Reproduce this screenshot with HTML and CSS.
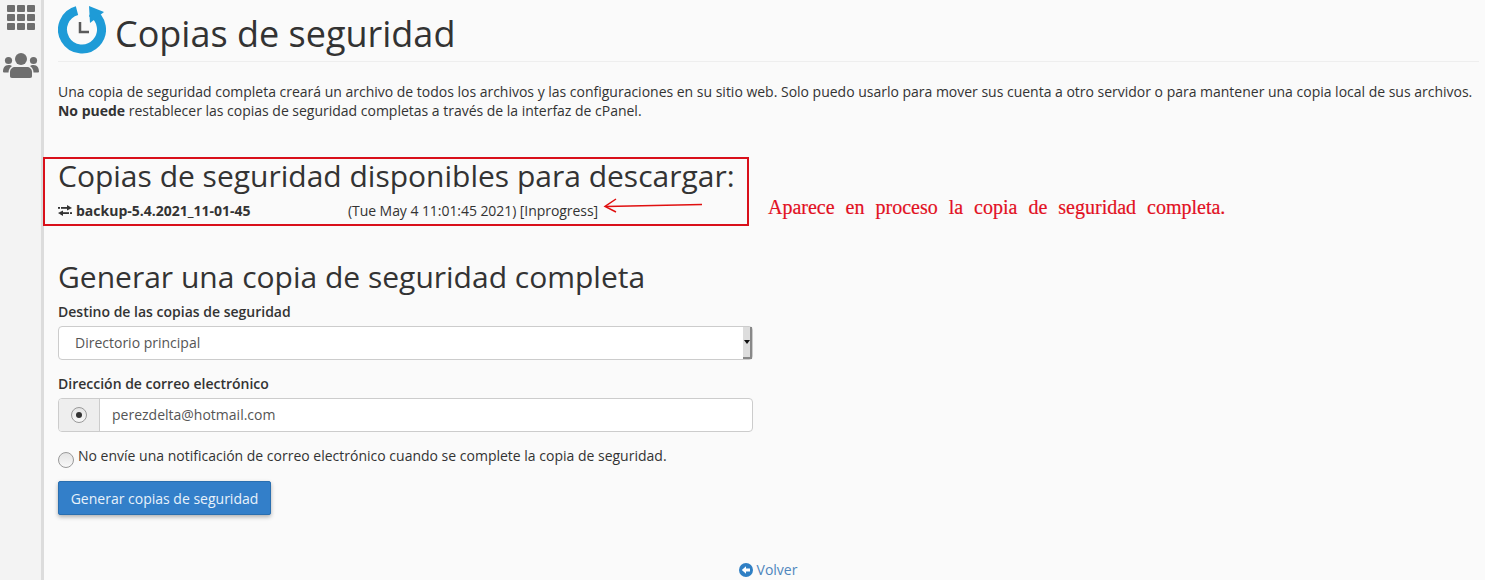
FILE: index.html
```html
<!DOCTYPE html>
<html lang="es">
<head>
<meta charset="utf-8">
<title>Copias de seguridad</title>
<link rel="stylesheet" href="styles.css">
</head>
<body>
<div class="shell">
  <aside class="rail">
    <svg class="rail-apps" width="28" height="25" viewBox="0 0 28 25"><g fill="#6e6e6e"><rect x="0" y="0" width="8" height="7" rx="1"/><rect x="10" y="0" width="8" height="7" rx="1"/><rect x="20" y="0" width="8" height="7" rx="1"/><rect x="0" y="9" width="8" height="7" rx="1"/><rect x="10" y="9" width="8" height="7" rx="1"/><rect x="20" y="9" width="8" height="7" rx="1"/><rect x="0" y="18" width="8" height="7" rx="1"/><rect x="10" y="18" width="8" height="7" rx="1"/><rect x="20" y="18" width="8" height="7" rx="1"/></g></svg>
    <svg class="rail-users" width="36" height="25" viewBox="0 0 36 25"><g fill="#6e6e6e"><circle cx="18" cy="6" r="6"/><circle cx="5.500" cy="7.500" r="3.600"/><circle cx="30.500" cy="7.500" r="3.600"/><path d="M9 25c-1.500 0-2-1-2-2v-4c0-3 2.500-5 5-5h12c2.500 0 5 2 5 5v4c0 1-.5 2-2 2z"/><path d="M0 19c0-4 1.500-7 5.500-7 1.500 0 3 .5 3.500 1-2 1.500-3.500 3.500-3.500 6.500H1c-.5 0-1-.2-1-.5z"/><path d="M36 19c0-4-1.500-7-5.500-7-1.500 0-3 .5-3.500 1 2 1.500 3.500 3.500 3.500 6.500H35c.5 0 1-.2 1-.5z"/></g></svg>
  </aside>
  <main class="content">
    <header class="page-head">
      <svg class="head-icon" width="48" height="49" viewBox="0 0 48 49">
        <path d="M33 7.200A19.500 19.500 0 1 1 19 5.650" fill="none" stroke="#1e9bd7" stroke-width="9"/>
        <path d="M31 1L46 7 32 18z" fill="#1e9bd7"/>
        <path d="M22 17V27H31" fill="none" stroke="#5a5a5a" stroke-width="2.500"/>
      </svg>
      <h1 class="page-title">Copias de seguridad</h1>
    </header>
    <p class="intro">Una copia de seguridad completa creará un archivo de todos los archivos y las configuraciones en su sitio web. Solo puedo usarlo para mover sus cuenta a otro servidor o para mantener una copia local de sus archivos. <strong>No puede</strong> restablecer las copias de seguridad completas a través de la interfaz de cPanel.</p>

    <section class="available">
      <h2 class="section-title">Copias de seguridad disponibles para descargar:</h2>
      <div class="backup-row">
        <svg class="swap" width="14" height="11" viewBox="0 0 14 11"><g fill="#333"><rect x="0" y="2" width="2" height="1.800"/><rect x="3" y="2" width="6" height="1.800"/><path d="M9 0L14 2.900 9 5.500z"/><rect x="12" y="7.200" width="2" height="1.800"/><rect x="5" y="7.200" width="6" height="1.800"/><path d="M5 5.500L0 8.100 5 11z"/></g></svg>
        <span class="backup-name">backup-5.4.2021_11-01-45</span>
        <span class="backup-meta">(Tue May 4 11:01:45 2021) [Inprogress]</span>
      </div>
    </section>

    <section class="generate">
      <h2 class="section-title">Generar una copia de seguridad completa</h2>
      <label class="field-label" for="dest">Destino de las copias de seguridad</label>
      <div class="select-box" id="dest">
        <span class="select-text">Directorio principal</span>
        <span class="spinner"><i></i></span>
      </div>
      <label class="field-label email-label" for="mail">Dirección de correo electrónico</label>
      <div class="input-group">
        <span class="addon"><span class="radio on"></span></span>
        <span class="input-text" id="mail">perezdelta@hotmail.com</span>
      </div>
      <div class="no-notify">
        <span class="radio plain"></span>
        <span>No envíe una notificación de correo electrónico cuando se complete la copia de seguridad.</span>
      </div>
      <button class="primary" type="button">Generar copias de seguridad</button>
    </section>

    <footer class="back">
      <a class="back-link" href="#">
        <svg width="14" height="14" viewBox="0 0 14 14"><circle cx="7" cy="7" r="7" fill="#2f7fc4"/><path d="M2.800 7L7 3.200V5.500H11V8.500H7V10.800z" fill="#fff"/></svg>
        Volver
      </a>
    </footer>
  </main>
</div>
<div class="note-layer">
  <svg class="arrow" width="100" height="16" viewBox="0 0 100 16"><path d="M99 6.500L3 8.500" stroke="#e01010" stroke-width="1.500" fill="none"/><path d="M13 1L2 8.500 13 14" stroke="#e01010" stroke-width="1.500" fill="none"/></svg>
  <span class="note">Aparece en proceso la copia de seguridad completa.</span>
</div>
</body>
</html>
```
FILE: styles.css
```css
*, *::before, *::after { box-sizing: border-box; }
html, body { margin: 0; height: 580px; overflow: hidden; }
body { background: #fafafa; color: #333; font-family: "Open Sans", sans-serif; font-size: 14px; position: relative; }
.shell { display: flex; height: 580px; }
.rail { width: 44px; flex: none; background: #f3f3f3; border-right: 3px solid #dcdcdc; display: flex; flex-direction: column; align-items: flex-start; padding: 5px 0 0 3px; gap: 23px; }
.rail-apps { margin-left: 4px; }
.rail-users { margin-left: 0; }
.content { flex: 1; padding: 0 6px 0 14px; min-width: 0; }
.page-head { display: flex; align-items: center; gap: 9px; height: 62px; border-bottom: 1px solid #eee; padding-top: 6px; }
.head-icon { flex: none; align-self: flex-start; margin-top: -1px; }
.page-title { margin: 0; font-size: 36px; font-weight: 400; line-height: 50px; }
.intro { margin: 20px 0 0; line-height: 19px; letter-spacing: -0.010px; }
.available { margin-top: 36px; height: 75px; }
.section-title { margin: 0; font-size: 30px; font-weight: 400; line-height: 40px; white-space: nowrap; }
.backup-row { display: flex; align-items: center; height: 20px; margin-top: 4px; }
.swap { margin-right: 4px; }
.backup-name { font-weight: 700; width: 272px; }
.backup-meta { letter-spacing: -0.060px; }
.generate { margin-top: 26px; width: 695px; }
.field-label { display: block; font-weight: 600; line-height: 20px; margin-top: 5px; }
.select-box { display: flex; justify-content: space-between; align-items: center; height: 34px; margin-top: 4px; border: 1px solid #ccc; border-radius: 4px; background: #fff; padding: 0 0 0 16px; color: #555; }
.select-text { margin-top: -2px; }
.spinner { width: 9px; height: 32px; background: #ddd; border-right: 2px solid #888; border-bottom: 2px solid #888; display: flex; align-items: center; justify-content: center; }
.spinner i { width: 0; height: 0; border: 3px solid transparent; border-top: 4px solid #111; border-bottom: 0; }
.email-label { margin-top: 14px; }
.input-group { display: flex; height: 34px; margin-top: 4px; border: 1px solid #ccc; border-radius: 4px; background: #fff; overflow: hidden; }
.addon { width: 41px; background: #eee; border-right: 1px solid #ccc; display: flex; align-items: center; justify-content: center; padding-right: 1px; }
.input-text { padding-left: 12px; line-height: 32px; color: #555; }
.radio { display: inline-block; width: 16px; height: 16px; border-radius: 50%; border: 1px solid #999; background: linear-gradient(#e4e4e4, #f8f8f8); position: relative; }
.radio.on::after { content: ""; position: absolute; left: 4px; top: 4px; width: 6px; height: 6px; border-radius: 50%; background: #333; }
.no-notify { display: flex; gap: 4px; line-height: 20px; margin-top: 14px; white-space: nowrap; }
.radio.plain { margin-top: 6px; flex: none; }
.primary { display: block; margin-top: 13px; width: 213px; height: 34px; border: 1px solid #2a6fb0; border-radius: 2px; background: #337fc9; color: #e8f2fb; font: 14px "Open Sans", sans-serif; box-shadow: 0 2px 4px rgba(0,0,0,.3); padding: 0; }
.back { margin-top: 45px; text-align: center; height: 20px; line-height: 20px; width: 1420px; }
.back-link { color: #4f86bd; text-decoration: none; display: inline-flex; align-items: center; gap: 4px; }
.note-layer { position: absolute; left: 0; top: 0; }
.note-layer::before { content: ""; position: absolute; left: 43px; top: 157px; width: 706px; height: 69px; border: 2px solid #d9101a; }
.arrow { position: absolute; left: 603px; top: 198px; }
.note { position: absolute; left: 768px; top: 195px; white-space: nowrap; color: #e2101f; font: 20px/24px "Liberation Serif", serif; word-spacing: 6px; -webkit-text-stroke: 0.2px #e2101f; }
```
